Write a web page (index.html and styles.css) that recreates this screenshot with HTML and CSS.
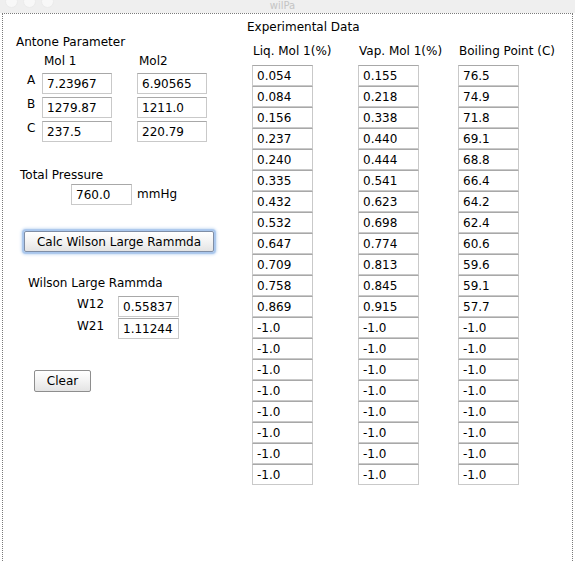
FILE: index.html
```html
<!DOCTYPE html>
<html lang="en">
<head>
  <meta charset="UTF-8" />
  <title>wilPa</title>
  <link rel="stylesheet" href="styles.css">
</head>
<body>
  <!-- Window title bar (cut off at the top) -->
  <div class="titlebar">
    <div class="lights"><span></span><span></span><span></span></div>
    <div class="title">wilPa</div>
  </div>

  <div class="frame">
    <!-- Left column: parameters and buttons -->
    <div class="left">
      <div class="caption antoine-caption">Antone Parameter</div>
      <div class="antoine">
        <span></span><span class="colhead">Mol 1</span><span class="colhead">Mol2</span>
        <span class="rowlabel">A</span>
        <input class="field" type="text" value="7.23967" />
        <input class="field" type="text" value="6.90565" />
        <span class="rowlabel">B</span>
        <input class="field" type="text" value="1279.87" />
        <input class="field" type="text" value="1211.0" />
        <span class="rowlabel">C</span>
        <input class="field" type="text" value="237.5" />
        <input class="field" type="text" value="220.79" />
      </div>

      <div class="caption pressure-caption">Total Pressure</div>
      <div class="pressure">
        <input class="field short" type="text" value="760.0" />
        <span class="unit">mmHg</span>
      </div>

      <button class="btn calc">Calc Wilson Large Rammda</button>

      <div class="caption wilson-caption">Wilson Large Rammda</div>
      <div class="wilson">
        <span class="wlabel">W12</span>
        <input class="field short" type="text" value="0.55837" />
        <span class="wlabel">W21</span>
        <input class="field short" type="text" value="1.11244" />
      </div>

      <button class="btn clear">Clear</button>
    </div>

    <!-- Right column: experimental data table -->
    <div class="right">
      <div class="caption">Experimental Data</div>
      <div class="data">
        <div class="col col-liq">
          <div class="colhead">Liq. Mol 1(%)</div>
          <input class="cell" value="0.054" />
          <input class="cell" value="0.084" />
          <input class="cell" value="0.156" />
          <input class="cell" value="0.237" />
          <input class="cell" value="0.240" />
          <input class="cell" value="0.335" />
          <input class="cell" value="0.432" />
          <input class="cell" value="0.532" />
          <input class="cell" value="0.647" />
          <input class="cell" value="0.709" />
          <input class="cell" value="0.758" />
          <input class="cell" value="0.869" />
          <input class="cell" value="-1.0" />
          <input class="cell" value="-1.0" />
          <input class="cell" value="-1.0" />
          <input class="cell" value="-1.0" />
          <input class="cell" value="-1.0" />
          <input class="cell" value="-1.0" />
          <input class="cell" value="-1.0" />
          <input class="cell" value="-1.0" />
        </div>
        <div class="col col-vap">
          <div class="colhead">Vap. Mol 1(%)</div>
          <input class="cell" value="0.155" />
          <input class="cell" value="0.218" />
          <input class="cell" value="0.338" />
          <input class="cell" value="0.440" />
          <input class="cell" value="0.444" />
          <input class="cell" value="0.541" />
          <input class="cell" value="0.623" />
          <input class="cell" value="0.698" />
          <input class="cell" value="0.774" />
          <input class="cell" value="0.813" />
          <input class="cell" value="0.845" />
          <input class="cell" value="0.915" />
          <input class="cell" value="-1.0" />
          <input class="cell" value="-1.0" />
          <input class="cell" value="-1.0" />
          <input class="cell" value="-1.0" />
          <input class="cell" value="-1.0" />
          <input class="cell" value="-1.0" />
          <input class="cell" value="-1.0" />
          <input class="cell" value="-1.0" />
        </div>
        <div class="col col-bp">
          <div class="colhead">Boiling Point (C)</div>
          <input class="cell" value="76.5" />
          <input class="cell" value="74.9" />
          <input class="cell" value="71.8" />
          <input class="cell" value="69.1" />
          <input class="cell" value="68.8" />
          <input class="cell" value="66.4" />
          <input class="cell" value="64.2" />
          <input class="cell" value="62.4" />
          <input class="cell" value="60.6" />
          <input class="cell" value="59.6" />
          <input class="cell" value="59.1" />
          <input class="cell" value="57.7" />
          <input class="cell" value="-1.0" />
          <input class="cell" value="-1.0" />
          <input class="cell" value="-1.0" />
          <input class="cell" value="-1.0" />
          <input class="cell" value="-1.0" />
          <input class="cell" value="-1.0" />
          <input class="cell" value="-1.0" />
          <input class="cell" value="-1.0" />
        </div>
      </div>
    </div>
  </div>
</body>
</html>
```

FILE: styles.css
```css
/* Basic Reset */
* {
  margin: 0;
  padding: 0;
  box-sizing: border-box;
}
body {
  font-family: "DejaVu Sans", Verdana, sans-serif;
  font-size: 12px;
  line-height: 15px;
  color: #000;
  background: #fff;
  height: 562px;
  overflow: hidden;
}
/* Title bar */
.titlebar {
  height: 13px;
  background: #efefef;
  overflow: hidden;
  display: flex;
  align-items: flex-start;
}
.lights {
  display: flex;
  gap: 5px;
  margin: -5px 0 0 5px;
}
.lights span {
  width: 13px;
  height: 13px;
  border-radius: 50%;
  background: #f8f8f8;
  border: 1px solid #ebebeb;
}
.title {
  flex: 1;
  text-align: center;
  color: #c4c4c4;
  font-size: 10px;
  line-height: 12px;
  padding-right: 64px;
}
/* Frame with dotted border */
.frame {
  margin-left: 2px;
  width: 571px;
  height: 560px;
  border: 1px dotted #7a7a7a;
  border-bottom: none;
  display: flex;
}
.left {
  width: 244px;
  display: flex;
  flex-direction: column;
  align-items: flex-start;
}
.right {
  flex: 1;
  padding-top: 6px;
}
/* Text fields */
.field,
.cell {
  font-family: "DejaVu Sans", Verdana, sans-serif;
  font-size: 12px;
  color: #000;
  height: 21px;
  padding: 0 0 0 4px;
  border: 1px solid #c9c9c9;
  border-top-color: #a8a8a8;
  background: #fff;
  outline: none;
}
.field {
  width: 70px;
}
.field.short {
  width: 61px;
}
/* Antoine parameter grid */
.antoine-caption {
  margin: 21px 0 0 13px;
}
.antoine {
  display: grid;
  grid-template-columns: 26px 95px 70px;
  row-gap: 3px;
  margin: 4px 0 0 13px;
}
.antoine .colhead {
  padding-left: 2px;
  margin-bottom: 1px;
}
.rowlabel {
  padding-left: 11px;
  line-height: 21px;
  margin-top: -3px;
}
/* Total pressure */
.pressure-caption {
  margin: 26px 0 0 17px;
}
.pressure {
  display: flex;
  align-items: center;
  gap: 5px;
  margin: 1px 0 0 68px;
}
/* Buttons */
.btn {
  font-family: "DejaVu Sans", Verdana, sans-serif;
  font-size: 12px;
  color: #000;
  border: 1px solid #8e8e8e;
  border-radius: 2px;
  background: linear-gradient(#ffffff, #f3f3f3 50%, #e4e4e4);
  cursor: pointer;
}
.calc {
  width: 190px;
  height: 21px;
  margin: 26px 0 0 21px;
  border-color: #7f8ea6;
  box-shadow: 0 0 1px 2px #a9c6ec, 0 0 3px 3px #d3e3f6;
}
.clear {
  width: 57px;
  height: 22px;
  margin: 31px 0 0 31px;
}
/* Wilson result */
.wilson-caption {
  margin: 24px 0 0 25px;
}
.wilson {
  display: grid;
  grid-template-columns: 41px 61px;
  row-gap: 1px;
  margin: 5px 0 0 74px;
}
.wlabel {
  line-height: 21px;
  margin-top: -2px;
}
/* Experimental data table */
.data {
  display: flex;
  margin: 9px 0 0 5px;
}
.col {
  display: flex;
  flex-direction: column;
  align-items: flex-start;
}
.col-liq {
  width: 106px;
}
.col-vap {
  width: 100px;
}
.col .colhead {
  margin: 0 0 6px 1px;
  white-space: nowrap;
}
.cell {
  width: 61px;
}
```
